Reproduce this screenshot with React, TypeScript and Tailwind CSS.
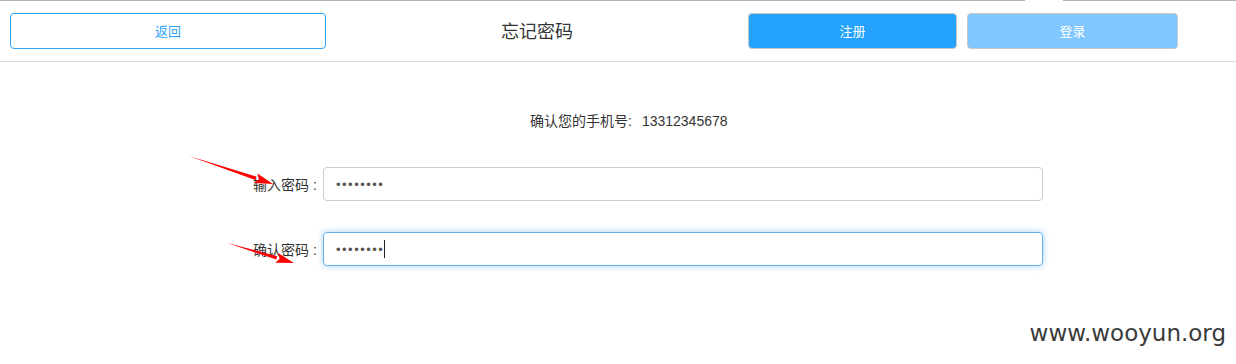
import React from 'react';

const font = { fontFamily: '"Liberation Sans", "Noto Sans CJK SC", sans-serif' };

const Arrow: React.FC<{ x1: number; y1: number; x2: number; y2: number }> = ({ x1, y1, x2, y2 }) => {
  const dx = x2 - x1;
  const dy = y2 - y1;
  const len = Math.hypot(dx, dy);
  const ux = dx / len;
  const uy = dy / len;
  const nx = -uy;
  const ny = ux;
  const bx = x2 - ux * 18;
  const by = y2 - uy * 18;
  const head = `${x2},${y2} ${bx + nx * 5},${by + ny * 5} ${bx + ux * 3},${by + uy * 3} ${bx - nx * 5},${by - ny * 5}`;
  const shaft = `${x1},${y1} ${bx + nx * 1.8},${by + ny * 1.8} ${bx - nx * 1.8},${by - ny * 1.8}`;
  return (
    <>
      <polygon points={shaft} fill="#ff0000" />
      <polygon points={head} fill="#ff0000" />
    </>
  );
};

export default function App() {
  return (
    <div className="relative w-[1236px] h-[364px] bg-white overflow-hidden text-[#333]" style={font}>
      {/* top browser line */}
      <div className="flex h-px">
        <div className="w-[1025px] bg-[#b4b4b4]" />
        <div className="w-[38px]" />
        <div className="flex-1 bg-[#b4b4b4]" />
      </div>

      {/* header */}
      <header className="flex items-start h-[61px] pt-[12px] pl-[10px] pr-[58px] border-b border-[#dcdcdc]">
        <button className="w-[316px] h-[36px] pt-[2px] rounded-[4px] border border-[#2ea3f9] text-[#2ea3f9] text-[13px] bg-white">
          返回
        </button>
        <div className="flex-1 h-[36px] pt-[3px] flex items-center justify-center text-[18px] text-[#333]">
          忘记密码
        </div>
        <button className="w-[209px] h-[36px] pt-[2px] rounded-[4px] border border-[#c8c8c8] bg-[#24a2fc] text-white text-[13px]">
          注册
        </button>
        <button className="ml-[10px] w-[211px] h-[36px] pt-[2px] rounded-[4px] border border-[#c8c8c8] bg-[#7fc7fe] text-white text-[13px]">
          登录
        </button>
      </header>

      {/* form */}
      <main className="flex flex-col">
        <div className="mt-[49px] pl-[530px] h-[20px] flex items-center text-[14px] text-[#333]">
          <span>确认您的手机号:</span>
          <span className="ml-[10px] text-[14px]">13312345678</span>
        </div>

        <div className="mt-[36px] flex items-center h-[34px]">
          <label className="w-[318px] pt-[3px] text-right text-[14px] text-[#333]">
            输入密码<span className="ml-[4px] mr-[1px]">:</span>
          </label>
          <input
            type="password"
            readOnly
            value="12345678"
            className="ml-[5px] w-[720px] h-[34px] rounded-[4px] border border-[#cccccc] px-[12px] text-[13px] tracking-[1.5px] text-[#555] outline-none"
          />
        </div>

        <div className="mt-[31px] flex items-center h-[34px]">
          <label className="w-[318px] pt-[3px] text-right text-[14px] text-[#333]">
            确认密码<span className="ml-[4px] mr-[1px]">:</span>
          </label>
          <div className="relative ml-[5px]">
            <input
              type="password"
              readOnly
              value="12345678"
              className="w-[720px] h-[34px] rounded-[4px] border border-[#66afe9] px-[12px] text-[13px] tracking-[1.5px] text-[#555] outline-none shadow-[0_0_6px_rgba(102,175,233,0.6)]"
            />
            <span className="absolute left-[61px] top-[8px] w-px h-[18px] bg-[#222]" />
          </div>
        </div>
      </main>

      {/* annotations */}
      <svg className="absolute left-0 top-0 pointer-events-none" width="1236" height="364">
        <Arrow x1={189} y1={156} x2={273} y2={184} />
        <Arrow x1={227} y1={243} x2={294} y2={263} />
      </svg>

      <div
        className="absolute right-[10px] bottom-[14px] text-[23px] text-[#3a3a3a]"
        style={{ fontFamily: '"DejaVu Sans", sans-serif' }}
      >
        www.wooyun.org
      </div>
    </div>
  );
}
